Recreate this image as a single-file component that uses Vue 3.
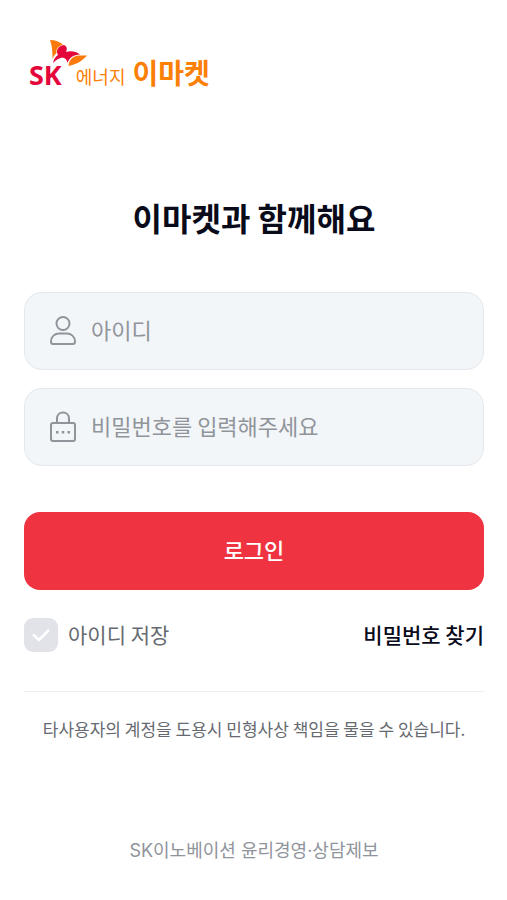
<script setup>
import { ref } from 'vue'

const userId = ref('')
const password = ref('')
const remember = ref(false)
</script>

<template>
  <div class="page">
    <header class="brand">
      <span class="sk">SK</span>
      <svg class="wings" viewBox="0 0 38 30" aria-hidden="true">
        <path class="orange" d="M0 0C5 0 10 2 13 4.500C8 6.500 6 9 6.500 13C5 14.500 3.500 16 2.500 19C2.500 11 2 5 0 0Z" />
        <path class="red" d="M14 5C17 6.500 17.500 9 16 12C20 10.500 26 11 30 14.500C23 15 19 18 17.500 23C17 20 15.500 18 12.500 17.500C9 18 6 20 3 23C4 19 5 17 8 15C5.500 10.500 8 6 14 5Z" />
        <path class="orange" d="M37 15.500C33 20 27 24.500 18.500 26C19 20 22 16 29.500 15.500Z" />
      </svg>
      <span class="energy">에너지</span>
      <span class="market">이마켓</span>
    </header>

    <main>
      <h1>이마켓과 함께해요</h1>
      <form @submit.prevent>
        <label class="field">
          <svg viewBox="0 0 28 32" aria-hidden="true">
            <circle cx="14" cy="8.500" r="6.500" />
            <path d="M2 26.500C2 21.500 6 18.500 10 18.500H18C22 18.500 26 21.500 26 26.500Q26 29 24 29H4Q2 29 2 26.500Z" />
          </svg>
          <input v-model="userId" type="text" placeholder="아이디" aria-label="아이디" autocomplete="username" />
        </label>
        <label class="field">
          <svg viewBox="0 0 28 32" aria-hidden="true">
            <path d="M8 12V7.500C8 4 10.500 1.500 14 1.500S20 4 20 7.500V12" />
            <rect x="2" y="12" width="24" height="18" rx="2" />
            <path class="dots" d="M7 20h2.500v2.500H7ZM12.750 20h2.500v2.500h-2.500ZM18.500 20H21v2.500h-2.500Z" />
          </svg>
          <input v-model="password" type="password" placeholder="비밀번호를 입력해주세요" aria-label="비밀번호" autocomplete="current-password" />
        </label>
        <button class="login" type="submit">로그인</button>
        <div class="options">
          <label class="remember">
            <span class="tick">
              <input v-model="remember" type="checkbox" />
              <svg viewBox="0 0 34 34" aria-hidden="true"><path d="M9 16.500L15 22L25 12" /></svg>
            </span>
            <span class="caption">아이디 저장</span>
          </label>
          <a class="find caption" href="#">비밀번호 찾기</a>
        </div>
      </form>
      <p class="notice">타사용자의 계정을 도용시 민형사상 책임을 물을 수 있습니다.</p>
    </main>

    <footer><a href="#">SK이노베이션 윤리경영·상담제보</a></footer>
  </div>
</template>

<style>
body {
  background: #fff;
}
</style>

<style scoped>
.page {
  box-sizing: border-box;
  min-height: 100vh;
  padding: 40px 23px 32px 24px;
  font-family: "Noto Sans CJK KR", "Noto Sans", sans-serif;
  color: #090b1a;
}
.brand {
  display: flex;
  align-items: flex-end;
  height: 48px;
  padding-left: 5px;
  line-height: 32px;
  color: #fb8005;
}
.sk {
  font: 700 27px/26px "Open Sans", sans-serif;
  color: #e4063a;
}
.wings {
  align-self: flex-start;
  width: 38px;
  height: 30px;
  margin-left: -12px;
}
.orange {
  fill: #f97a0a;
}
.red {
  fill: #e4063a;
}
.energy {
  margin-left: -12px;
  font-size: 18px;
  line-height: 24px;
}
.market {
  margin-left: 7px;
  font-size: 28px;
  font-weight: 700;
}
h1 {
  margin: 105px 0 0;
  font-size: 32px;
  font-weight: 700;
  line-height: 48px;
  text-align: center;
}
form {
  margin-top: 51px;
}
.field {
  box-sizing: border-box;
  display: flex;
  align-items: center;
  gap: 14px;
  height: 78px;
  padding: 0 24px;
  border: 1px solid #e4e7eb;
  border-radius: 18px;
  background: #f3f6f8;
}
.field + .field {
  margin-top: 18px;
}
.field svg {
  flex: none;
  width: 28px;
  height: 32px;
  fill: none;
  stroke: #90949b;
  stroke-width: 2;
}
.field .dots {
  fill: #90949b;
  stroke: none;
}
.field input {
  flex: 1;
  min-width: 0;
  padding: 0 0 4px;
  border: 0;
  outline: 0;
  background: none;
  font: inherit;
  font-size: 22px;
  line-height: 32px;
  color: inherit;
}
.field input::placeholder {
  color: #90949b;
  opacity: 1;
}
.login {
  display: block;
  width: 100%;
  height: 78px;
  margin-top: 46px;
  padding: 0 0 4px;
  border: 0;
  border-radius: 16px;
  background: #ef3340;
  color: #fff;
  font: inherit;
  font-size: 22px;
  font-weight: 500;
}
.options {
  display: flex;
  align-items: center;
  justify-content: space-between;
  margin-top: 28px;
  font-size: 21px;
  line-height: 32px;
}
.caption {
  padding-bottom: 2px;
}
.remember {
  display: flex;
  align-items: center;
  gap: 10px;
  color: #666a70;
}
.tick {
  display: grid;
}
.tick > * {
  grid-area: 1 / 1;
  width: 34px;
  height: 34px;
}
.tick input {
  appearance: none;
  margin: 0;
  border-radius: 9px;
  background: #e1e3e9;
}
.tick input:checked {
  background: #ef3340;
}
.tick svg {
  pointer-events: none;
  fill: none;
  stroke: #fff;
  stroke-width: 2.500;
}
a {
  color: inherit;
  text-decoration: none;
}
.find {
  font-weight: 500;
}
.notice {
  margin: 39px 0 0;
  padding-top: 24px;
  border-top: 1px solid #edf0f3;
  font-size: 17px;
  line-height: 26px;
  text-align: center;
  color: #666a70;
}
footer {
  margin-top: 96px;
  font-family: Inter, "Noto Sans CJK KR", sans-serif;
  font-size: 18px;
  line-height: 26px;
  text-align: center;
  color: #90949b;
}
</style>
